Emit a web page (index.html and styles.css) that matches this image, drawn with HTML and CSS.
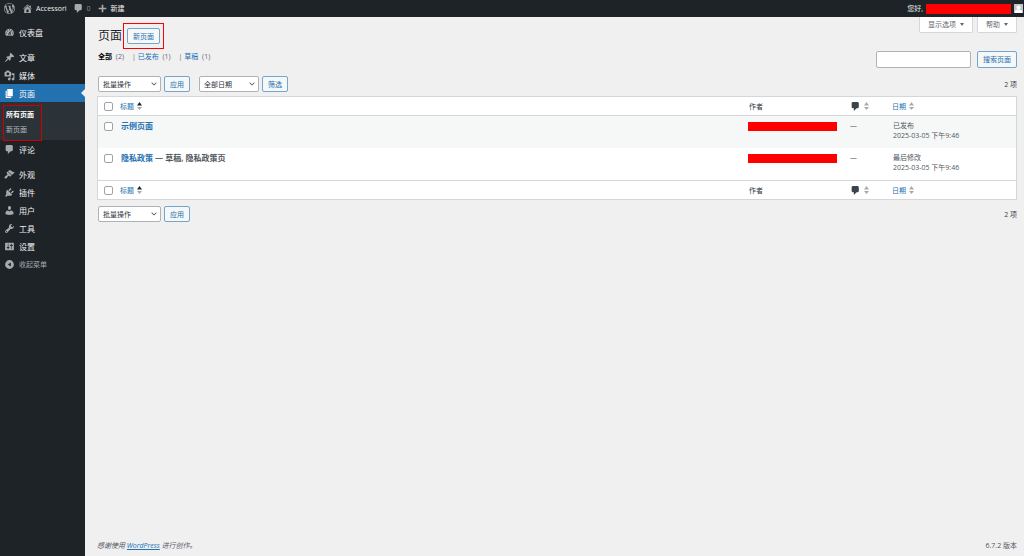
FILE: index.html
```html
<!DOCTYPE html>
<html lang="zh-CN">
<head>
    <meta charset="UTF-8">
    <meta name="viewport" content="width=device-width, initial-scale=1.0">
    <title>页面 ‹ Accessori — WordPress</title>
    <link rel="stylesheet" href="styles.css">
</head>
<body>

    <!-- 图标 -->
    <svg class="icon-defs" aria-hidden="true">
        <symbol id="i-wordpress" viewBox="0 0 20 20"><path d="M20 10c0-5.51-4.49-10-10-10C4.48 0 0 4.49 0 10c0 5.52 4.48 10 10 10 5.51 0 10-4.48 10-10zM7.78 15.37L4.37 6.22c.55-.02 1.17-.08 1.17-.08.5-.06.44-1.13-.06-1.11 0 0-1.45.11-2.37.11-.18 0-.37 0-.58-.01C4.12 2.69 6.87 1.11 10 1.11c2.33 0 4.45.87 6.05 2.34-.68-.11-1.65.39-1.65 1.58 0 .74.45 1.36.9 2.1.35.61.55 1.36.55 2.46 0 1.49-1.4 5-1.4 5l-3.03-8.37c.54-.02.82-.17.82-.17.5-.05.44-1.25-.06-1.22 0 0-1.44.12-2.38.12-.87 0-2.33-.12-2.33-.12-.5-.03-.56 1.2-.06 1.22l.92.08 1.26 3.41zM17.41 10c.24-.64.74-1.87.43-4.25.7 1.29 1.05 2.71 1.05 4.25 0 3.29-1.73 6.24-4.4 7.78.97-2.59 1.94-5.2 2.92-7.78zM6.1 18.09C3.12 16.65 1.11 13.53 1.11 10c0-1.3.23-2.48.72-3.59C3.25 10.3 4.67 14.2 6.1 18.09zm4.03-6.63l2.58 6.98c-.86.29-1.76.45-2.71.45-.79 0-1.57-.11-2.29-.33.81-2.38 1.62-4.74 2.42-7.1z"/></symbol>
        <symbol id="i-home" viewBox="0 0 20 20"><path d="M16 8.5l1.53 1.53-1.06 1.06L10 4.6l-6.47 6.49-1.06-1.06L10 2.5l4 4v-2h2v4zm-6-2.46l6 5.99V18H4v-5.97zM12 17v-5H8v5h4z"/></symbol>
        <symbol id="i-comment" viewBox="0 0 20 20"><path d="M5 2h9q.82 0 1.41.59T16 4v7q0 .82-.59 1.41T14 13h-2l-5 5v-5H5q-.82 0-1.41-.59T3 11V4q0-.82.59-1.41T5 2z"/></symbol>
        <symbol id="i-plus" viewBox="0 0 20 20"><path d="M17 8.500v3h-5.500V17h-3v-5.500H3v-3h5.500V3h3v5.500z"/></symbol>
        <symbol id="i-dashboard" viewBox="0 0 20 20"><path d="M3.76 16h12.48c1.1-1.37 1.76-3.11 1.76-5 0-4.42-3.58-8-8-8s-8 3.58-8 8c0 1.89.66 3.63 1.76 5zM10 4c.55 0 1 .45 1 1s-.45 1-1 1-1-.45-1-1 .45-1 1-1zM6 6c.55 0 1 .45 1 1s-.45 1-1 1-1-.45-1-1 .45-1 1-1zm8 0c.55 0 1 .45 1 1s-.45 1-1 1-1-.45-1-1 .45-1 1-1zm-5.37 5.55L12 7v6c0 1.1-.9 2-2 2s-2-.9-2-2c0-.57.24-1.08.63-1.45zM4 10c.55 0 1 .45 1 1s-.45 1-1 1-1-.45-1-1 .45-1 1-1zm12 0c.55 0 1 .45 1 1s-.45 1-1 1-1-.45-1-1 .45-1 1-1zm-5 3c0-.55-.45-1-1-1s-1 .45-1 1 .45 1 1 1 1-.45 1-1z"/></symbol>
        <symbol id="i-post" viewBox="0 0 20 20"><path d="M10.44 3.02l1.82-1.82 6.36 6.35-1.83 1.82c-1.05-.68-2.48-.57-3.41.36l-.75.75c-.92.93-1.04 2.35-.35 3.41l-1.83 1.82-2.41-2.41-2.8 2.79c-.42.42-3.38 2.71-3.8 2.29s1.86-3.39 2.28-3.81l2.79-2.79L4.1 9.36l1.83-1.82c1.05.69 2.48.57 3.4-.36l.75-.75c.93-.92 1.05-2.35.36-3.41z"/></symbol>
        <symbol id="i-media" viewBox="0 0 20 20"><path d="M13 11V4c0-.55-.45-1-1-1h-1.67L9 1H5L3.67 3H2c-.55 0-1 .45-1 1v7c0 .55.45 1 1 1h10c.55 0 1-.45 1-1zM7 4.5c1.38 0 2.5 1.12 2.5 2.5S8.38 9.5 7 9.5 4.5 8.38 4.5 7 5.62 4.5 7 4.5zM14 6h5v10.5c0 1.38-1.12 2.5-2.5 2.5S14 17.88 14 16.5s1.12-2.5 2.5-2.5c.17 0 .34.02.5.05V9h-3V6zm-4 8.05V13h2v3.5c0 1.38-1.12 2.5-2.5 2.5S7 17.88 7 16.5 8.12 14 9.5 14c.17 0 .34.02.5.05z"/></symbol>
        <symbol id="i-page" viewBox="0 0 20 20"><path d="M6 15V2h10v13H6zm-1 1h8v2H3V5h2v11z"/></symbol>
        <symbol id="i-appearance" viewBox="0 0 20 20"><path d="M14.48 11.06L7.41 3.99l1.5-1.5c.5-.56 2.3-.47 3.51.32 1.21.8 1.43 1.28 2.91 2.1 1.18.64 2.45 1.26 4.45.85zm-.71.71L6.7 4.7 4.93 6.47c-.39.39-.39 1.02 0 1.41l1.06 1.06c.39.39.39 1.03 0 1.42-.6.6-1.43 1.11-2.21 1.69-.35.26-.7.53-1.01.84C1.43 14.23.4 16.08 1.4 17.07c.99 1 2.84-.03 4.18-1.36.31-.31.58-.66.85-1.02.57-.78 1.08-1.61 1.69-2.21.39-.39 1.02-.39 1.41 0l1.06 1.06c.39.39 1.02.39 1.41 0z"/></symbol>
        <symbol id="i-plugins" viewBox="0 0 20 20"><path d="M13.11 4.36L9.87 7.6 8 5.73l3.24-3.24c.35-.34 1.05-.2 1.56.32.52.51.66 1.21.31 1.55zm-8 1.77l.91-1.12 9.01 9.01-1.19.84c-.71.71-2.63 1.16-3.82 1.16H6.14L4.9 17.26c-.59.59-1.54.59-2.12 0-.59-.58-.59-1.53 0-2.12l1.24-1.24v-3.88c0-1.13.4-3.19 1.09-3.89zm7.26 3.97l3.24-3.24c.34-.35 1.04-.21 1.55.31.52.51.66 1.21.31 1.55l-3.24 3.25z"/></symbol>
        <symbol id="i-users" viewBox="0 0 20 20"><path d="M10 9.25c-2.27 0-2.73-3.44-2.73-3.44C7 4.02 7.82 2 9.97 2c2.16 0 2.98 2.02 2.71 3.81 0 0-.41 3.44-2.68 3.44zm0 2.57L12.72 10c2.39 0 4.52 2.33 4.52 4.53v2.49s-3.65 1.13-7.24 1.13c-3.65 0-7.24-1.13-7.24-1.13v-2.49c0-2.25 1.94-4.48 4.47-4.48z"/></symbol>
        <symbol id="i-tools" viewBox="0 0 20 20"><path d="M16.68 9.77c-1.34 1.34-3.3 1.67-4.95.99l-5.41 6.52c-.99.99-2.59.99-3.58 0s-.99-2.59 0-3.57l6.52-5.42c-.68-1.65-.35-3.61.99-4.95 1.28-1.28 3.12-1.62 4.72-1.06l-2.89 2.89 2.82 2.82 2.86-2.87c.53 1.58.18 3.39-1.08 4.65zM3.81 16.21c.4.39 1.04.39 1.43 0 .4-.4.4-1.04 0-1.43-.39-.4-1.03-.4-1.43 0-.39.39-.39 1.03 0 1.43z"/></symbol>
        <symbol id="i-settings" viewBox="0 0 20 20"><path d="M18 16V4c0-.55-.45-1-1-1H3c-.55 0-1 .45-1 1v12c0 .55.45 1 1 1h14c.55 0 1-.45 1-1zM8 11h1c.55 0 1 .45 1 1s-.45 1-1 1H8v1.5c0 .28-.22.5-.5.5s-.5-.22-.5-.5V13H6c-.55 0-1-.45-1-1s.45-1 1-1h1V5.5c0-.28.22-.5.5-.5s.5.22.5.5V11zm5-2h-1c-.55 0-1-.45-1-1s.45-1 1-1h1V5.5c0-.28.22-.5.5-.5s.5.22.5.5V7h1c.55 0 1 .45 1 1s-.45 1-1 1h-1v5.5c0 .28-.22.5-.5.5s-.5-.22-.5-.5V9z"/></symbol>
        <symbol id="i-collapse" viewBox="0 0 20 20"><path fill-rule="evenodd" d="M10 2a8 8 0 1 0 0 16 8 8 0 0 0 0-16zm2.500 4.500v7L7 10z"/></symbol>
        <symbol id="i-chevron" viewBox="0 0 20 20"><path d="M5 6l5 5 5-5 2 1-7 7-7-7 2-1z"/></symbol>
        <symbol id="i-down" viewBox="0 0 10 10"><path d="M0 1h10L5 9z"/></symbol>
        <symbol id="i-sort" viewBox="0 0 10 16"><path class="sort-up" d="M0 7h10L5 0z"/><path class="sort-down" d="M0 10h10l-5 6z"/></symbol>
    </svg>

    <!-- 顶部工具栏 -->
    <header class="adminbar">
        <a href="#" class="bar-item bar-logo" aria-label="关于WordPress"><svg class="icon"><use href="#i-wordpress"/></svg></a>
        <a href="#" class="bar-item"><svg class="icon"><use href="#i-home"/></svg>Accessori</a>
        <a href="#" class="bar-item bar-comments"><svg class="icon"><use href="#i-comment"/></svg><span>0</span></a>
        <a href="#" class="bar-item"><svg class="icon"><use href="#i-plus"/></svg>新建</a>
        <a href="#" class="bar-item bar-account">您好, <span class="redacted"></span>
            <svg class="avatar" viewBox="0 0 18 18"><path fill="#c3c4c7" d="M0 0h18v18H0z"/><circle cx="9" cy="7" r="4" fill="#fff"/><path fill="#fff" d="M2 18v-3q0-4 5-4h4q5 0 5 4v3z"/></svg>
        </a>
    </header>

    <div class="wrap">
        <!-- 侧边菜单 -->
        <nav class="sidebar">
            <ul class="menu">
                <li><a href="#"><svg class="icon"><use href="#i-dashboard"/></svg>仪表盘</a></li>
                <li class="sep"><a href="#"><svg class="icon"><use href="#i-post"/></svg>文章</a></li>
                <li><a href="#"><svg class="icon"><use href="#i-media"/></svg>媒体</a></li>
                <li class="current">
                    <a href="#"><svg class="icon"><use href="#i-page"/></svg>页面</a>
                    <ul class="submenu">
                        <li><a href="#" class="active">所有页面</a></li>
                        <li><a href="#">新页面</a></li>
                    </ul>
                </li>
                <li><a href="#"><svg class="icon"><use href="#i-comment"/></svg>评论</a></li>
                <li class="sep"><a href="#"><svg class="icon"><use href="#i-appearance"/></svg>外观</a></li>
                <li><a href="#"><svg class="icon"><use href="#i-plugins"/></svg>插件</a></li>
                <li><a href="#"><svg class="icon"><use href="#i-users"/></svg>用户</a></li>
                <li><a href="#"><svg class="icon"><use href="#i-tools"/></svg>工具</a></li>
                <li><a href="#"><svg class="icon"><use href="#i-settings"/></svg>设置</a></li>
                <li><button type="button" class="collapse"><svg class="icon"><use href="#i-collapse"/></svg>收起菜单</button></li>
            </ul>
        </nav>

        <main class="content">
            <div class="page-head">
                <h1>页面</h1>
                <div class="highlight"><a href="#" class="button">新页面</a></div>
                <div class="screen-links">
                    <button type="button">显示选项<svg><use href="#i-down"/></svg></button>
                    <button type="button">帮助<svg><use href="#i-down"/></svg></button>
                </div>
            </div>

            <div class="filter-row">
                <ul class="views">
                    <li><a href="#" class="active">全部</a> <span>(2)</span></li>
                    <li><a href="#">已发布</a> <span>(1)</span></li>
                    <li><a href="#">草稿</a> <span>(1)</span></li>
                </ul>
                <form class="search">
                    <input type="search" aria-label="搜索页面">
                    <button type="button" class="button">搜索页面</button>
                </form>
            </div>

            <div class="tablenav">
                <div class="select">
                    <select aria-label="选择批量操作"><option>批量操作</option></select>
                    <svg><use href="#i-chevron"/></svg>
                </div>
                <button type="button" class="button">应用</button>
                <div class="select select-date">
                    <select aria-label="按日期筛选"><option>全部日期</option></select>
                    <svg><use href="#i-chevron"/></svg>
                </div>
                <button type="button" class="button">筛选</button>
                <span class="count">2 项</span>
            </div>

            <table class="list">
                <thead>
                    <tr>
                        <th class="col-check"><input type="checkbox" aria-label="全选"></th>
                        <th class="col-title"><a href="#">标题<svg class="sort sorted"><use href="#i-sort"/></svg></a></th>
                        <th class="col-author">作者</th>
                        <th class="col-comments"><a href="#" aria-label="评论"><svg class="icon"><use href="#i-comment"/></svg><svg class="sort"><use href="#i-sort"/></svg></a></th>
                        <th class="col-date"><a href="#">日期<svg class="sort"><use href="#i-sort"/></svg></a></th>
                    </tr>
                </thead>
                <tbody>
                    <tr>
                        <td class="col-check"><input type="checkbox" aria-label="选择示例页面"></td>
                        <td class="col-title"><strong><a href="#">示例页面</a></strong></td>
                        <td class="col-author"><span class="redacted"></span></td>
                        <td class="col-comments">—</td>
                        <td>已发布<br>2025-03-05 下午9:46</td>
                    </tr>
                    <tr>
                        <td class="col-check"><input type="checkbox" aria-label="选择隐私政策"></td>
                        <td class="col-title"><strong><a href="#">隐私政策</a> — 草稿, 隐私政策页</strong></td>
                        <td class="col-author"><span class="redacted"></span></td>
                        <td class="col-comments">—</td>
                        <td>最后修改<br>2025-03-05 下午9:46</td>
                    </tr>
                </tbody>
                <tfoot>
                    <tr>
                        <th class="col-check"><input type="checkbox" aria-label="全选"></th>
                        <th class="col-title"><a href="#">标题<svg class="sort sorted"><use href="#i-sort"/></svg></a></th>
                        <th>作者</th>
                        <th class="col-comments"><a href="#" aria-label="评论"><svg class="icon"><use href="#i-comment"/></svg><svg class="sort"><use href="#i-sort"/></svg></a></th>
                        <th><a href="#">日期<svg class="sort"><use href="#i-sort"/></svg></a></th>
                    </tr>
                </tfoot>
            </table>

            <div class="tablenav tablenav-bottom">
                <div class="select">
                    <select aria-label="选择批量操作"><option>批量操作</option></select>
                    <svg><use href="#i-chevron"/></svg>
                </div>
                <button type="button" class="button">应用</button>
                <span class="count">2 项</span>
            </div>

            <footer class="footer">
                <em>感谢使用 <a href="#">WordPress</a> 进行创作。</em>
                <span>6.7.2 版本</span>
            </footer>
        </main>
    </div>

</body>
</html>
```
FILE: styles.css
```css
* {
    box-sizing: border-box;
}

body {
    margin: 0;
    min-height: 100vh;
    display: flex;
    flex-direction: column;
    background-color: #f0f0f1;
    color: #3c434a;
    font-family: "Open Sans", "Noto Sans CJK SC", sans-serif;
    font-size: 7px;
    line-height: 11px;
}

a {
    color: #2271b1;
    text-decoration: none;
}

a:hover {
    color: #135e96;
}

ul {
    list-style: none;
    margin: 0;
    padding: 0;
}

button,
input,
select {
    font: inherit;
    margin: 0;
}

svg {
    display: block;
    flex: none;
    fill: currentColor;
}

.icon-defs {
    position: absolute;
    width: 0;
    height: 0;
}

.icon {
    width: 11px;
    height: 11px;
}

.redacted {
    display: block;
    background-color: #f00;
}

/* 顶部工具栏 */
.adminbar {
    display: flex;
    align-items: center;
    gap: 6px;
    height: 17px;
    padding: 0 1px 0 4px;
    background-color: #1d2327;
}

.bar-item {
    display: flex;
    align-items: center;
    gap: 3px;
    color: #f0f0f1;
}

.bar-logo {
    margin-right: 1px;
}

.bar-item .icon {
    color: #a7aaad;
}

.bar-comments {
    color: #8c8f94;
}

.bar-account {
    margin-left: auto;
}

.bar-account .redacted {
    width: 85px;
    height: 10px;
}

.avatar {
    width: 9px;
    height: 9px;
}

.wrap {
    flex: 1;
    display: flex;
}

/* 侧边菜单 */
.sidebar {
    flex: none;
    width: 85px;
    padding-top: 6px;
    background-color: #1d2327;
}

.menu a,
.collapse {
    display: flex;
    align-items: center;
    gap: 4px;
    height: 18px;
    padding-left: 4px;
    color: #f0f0f1;
}

.menu a {
    font-size: 8px;
}

.menu .icon {
    color: #a7aaad;
}

.menu .sep {
    margin-top: 7px;
}

.menu .current > a {
    position: relative;
    background-color: #2271b1;
    color: #fff;
}

.menu .current > a::after {
    content: "";
    position: absolute;
    right: 0;
    top: 5px;
    border: 4px solid transparent;
    border-left-width: 0;
    border-right-color: #f0f0f1;
}

.menu .current .icon {
    color: #fff;
}

.submenu {
    padding: 3px 43px 0 3px;
    height: 38px;
    background-color: #2c3338;
}

.submenu li {
    border: solid #d00000;
    border-width: 0 1px;
}

.submenu li:first-child {
    border-top-width: 1px;
    padding-top: 1px;
}

.submenu li:last-child {
    border-bottom-width: 1px;
    padding-bottom: 3px;
}

.submenu a {
    height: 15px;
    padding-left: 2px;
    color: #b4b9be;
    font-size: 7px;
    white-space: nowrap;
}

.submenu .active {
    color: #fff;
    font-weight: 600;
}

.collapse {
    border: 0;
    background: none;
    color: #a7aaad;
}

/* 主内容 */
.content {
    flex: 1;
    display: flex;
    flex-direction: column;
    min-width: 0;
    padding: 0 7px 5px 12px;
}

.page-head {
    display: flex;
    align-items: flex-start;
    height: 34px;
    padding-left: 1px;
}

h1 {
    margin: 10px 1px 0 0;
    color: #1d2327;
    font-size: 12px;
    font-weight: 400;
    line-height: 18px;
}

.highlight {
    margin-top: 6px;
    padding: 4px 3px;
    border: 1px solid #f00;
}

.button {
    display: flex;
    align-items: center;
    height: 16px;
    padding: 0 5px;
    border: 1px solid #72a5cf;
    border-radius: 2px;
    background-color: #f6f7f7;
    color: #2271b1;
    white-space: nowrap;
    cursor: pointer;
}

.screen-links {
    display: flex;
    gap: 4px;
    margin-left: auto;
}

.screen-links button {
    display: flex;
    align-items: center;
    gap: 4px;
    height: 16px;
    padding: 0 8px;
    border: 1px solid #d5d6d9;
    border-top: 0;
    border-radius: 0 0 2px 2px;
    background-color: #fff;
    color: #646970;
}

.screen-links svg {
    width: 4px;
    height: 5px;
}

.filter-row {
    display: flex;
    justify-content: space-between;
    align-items: flex-start;
}

.views {
    display: flex;
    gap: 7px;
    padding-left: 1px;
    color: #646970;
}

.views li + li::before {
    content: "| ";
}

.views span {
    margin: 0 1px 0 2px;
}

.views .active {
    color: #000;
    font-weight: 600;
}

.search {
    display: flex;
    gap: 6px;
}

.search input {
    width: 95px;
    height: 17px;
    padding: 0 4px;
    border: 1px solid #b0b2b6;
    border-radius: 2px;
    background-color: #fff;
}

.search .button {
    height: 17px;
}

.tablenav {
    display: flex;
    align-items: center;
    gap: 3px;
    margin: 8px 0 4px;
    padding-left: 1px;
}

.tablenav-bottom {
    margin-top: 6px;
}

.select {
    position: relative;
    width: 63px;
}

.select-date {
    width: 60px;
    margin-left: 6px;
}

.select select {
    display: block;
    width: 100%;
    height: 16px;
    padding: 0 12px 0 4px;
    border: 1px solid #b0b2b6;
    border-radius: 2px;
    appearance: none;
    background-color: #fff;
    color: #2c3338;
}

.select svg {
    position: absolute;
    right: 3px;
    top: 4px;
    width: 8px;
    height: 8px;
    pointer-events: none;
}

.count {
    margin-left: auto;
}

/* 页面列表 */
.list {
    width: 100%;
    table-layout: fixed;
    border: 1px solid #d5d6d9;
    border-spacing: 0;
    background-color: #fff;
}

.list th {
    height: 19px;
    padding: 0 2px;
    color: #2c3338;
    font-weight: 400;
    text-align: left;
}

.list thead th {
    border-bottom: 1px solid #d5d6d9;
}

.list tfoot th {
    border-top: 1px solid #d5d6d9;
}

.list th a {
    display: flex;
    align-items: center;
    gap: 3px;
}

.list td {
    height: 32px;
    padding: 5px 3px 0;
    color: #50575e;
    line-height: 10px;
    vertical-align: top;
}

.list tbody tr:first-child {
    background-color: #f6f7f7;
}

.list strong {
    font-weight: 600;
}

.list td.col-title {
    font-size: 8px;
}

.list .col-check {
    width: 20px;
    padding-left: 6px;
}

.list .col-author {
    width: 102px;
}

.list .col-comments {
    width: 41px;
    padding-left: 1px;
}

.list .col-date {
    width: 126px;
}

.list .redacted {
    width: 89px;
    height: 9px;
    margin: 1px 0 0 -2px;
}

.list input {
    display: block;
    width: 9px;
    height: 9px;
    appearance: none;
    border: 1px solid #a0a3a8;
    border-radius: 2px;
    background-color: #fff;
}

.list td input {
    margin-top: 1px;
}

.list .icon {
    color: #3c434a;
}

.sort {
    width: 5px;
    height: 8px;
    color: #a7aaad;
}

.sorted {
    color: #1d2327;
}

.sort-down {
    fill: #a7aaad;
}

/* 页脚 */
.footer {
    display: flex;
    justify-content: space-between;
    margin-top: auto;
    color: #50575e;
}

.footer a {
    text-decoration: underline;
}
```
